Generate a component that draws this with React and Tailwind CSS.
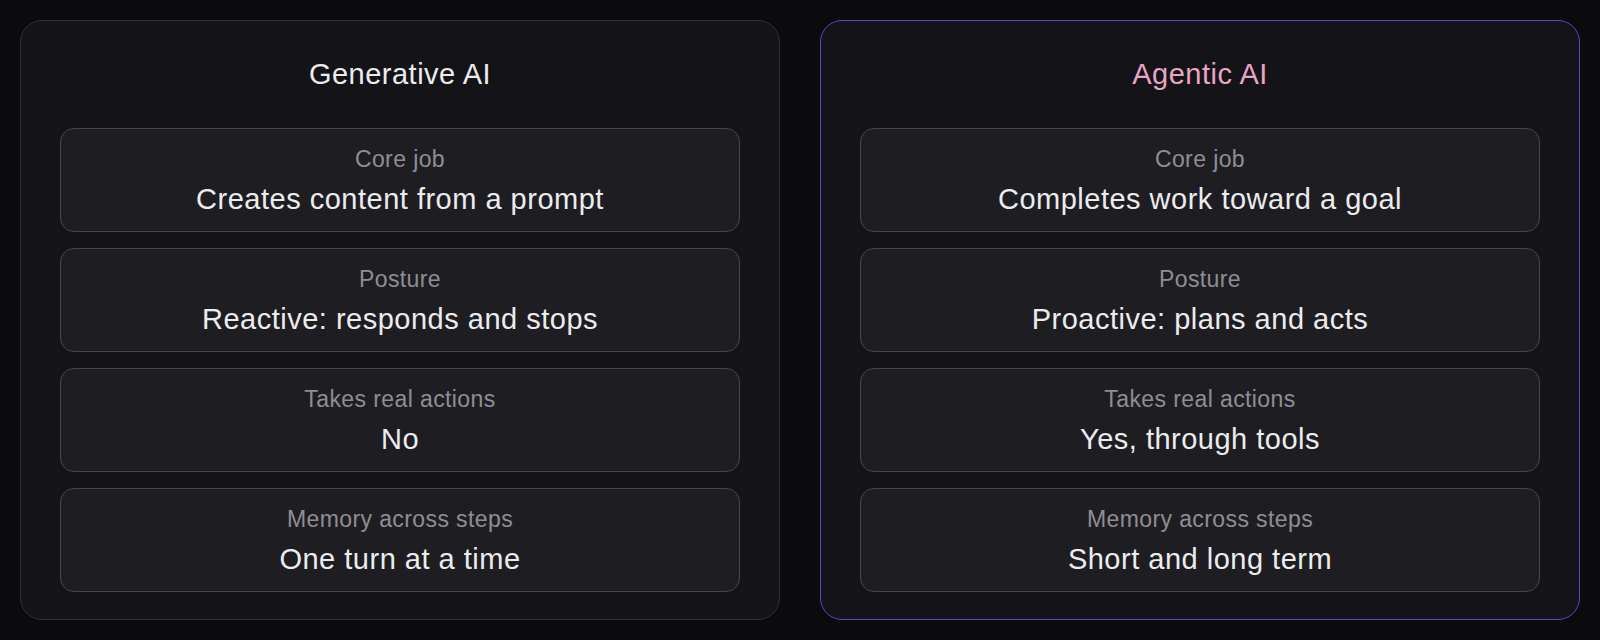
import React from 'react';

const columns = [
  {
    title: 'Generative AI',
    highlight: false,
    rows: [
      { label: 'Core job', value: 'Creates content from a prompt' },
      { label: 'Posture', value: 'Reactive: responds and stops' },
      { label: 'Takes real actions', value: 'No' },
      { label: 'Memory across steps', value: 'One turn at a time' },
    ],
  },
  {
    title: 'Agentic AI',
    highlight: true,
    rows: [
      { label: 'Core job', value: 'Completes work toward a goal' },
      { label: 'Posture', value: 'Proactive: plans and acts' },
      { label: 'Takes real actions', value: 'Yes, through tools' },
      { label: 'Memory across steps', value: 'Short and long term' },
    ],
  },
];

function Row({ label, value }) {
  return (
    <div className="rounded-[14px] border border-[#46464b] bg-[#1e1e22] pt-[16px] pb-[14px] text-center">
      <p className="text-[23px] leading-[28px] tracking-[0.4px] text-[#8e8e93]">{label}</p>
      <p className="mt-[8px] text-[29px] leading-[36px] tracking-[0.5px] text-[#ececef]">{value}</p>
    </div>
  );
}

function Column({ title, highlight, rows }) {
  return (
    <div
      className={`flex-1 rounded-[22px] border bg-[#141418] px-[39px] pt-[35px] pb-[27px] ${
        highlight ? 'border-[#5b49b9]' : 'border-[#303035]'
      }`}
    >
      <h2
        className={`text-center text-[29px] leading-[36px] tracking-[0.5px] font-normal ${
          highlight ? 'text-[#e7a6c6]' : 'text-[#ececef]'
        }`}
      >
        {title}
      </h2>
      <div className="mt-[36px] flex flex-col gap-[16px]">
        {rows.map((r) => (
          <Row key={r.label} label={r.label} value={r.value} />
        ))}
      </div>
    </div>
  );
}

export default function App() {
  return (
    <div
      className="flex h-[640px] w-[1600px] gap-[40px] bg-[#0b0a0f] p-[20px]"
      style={{ fontFamily: '"Liberation Sans", Arial, sans-serif' }}
    >
      {columns.map((c) => (
        <Column key={c.title} {...c} />
      ))}
    </div>
  );
}
